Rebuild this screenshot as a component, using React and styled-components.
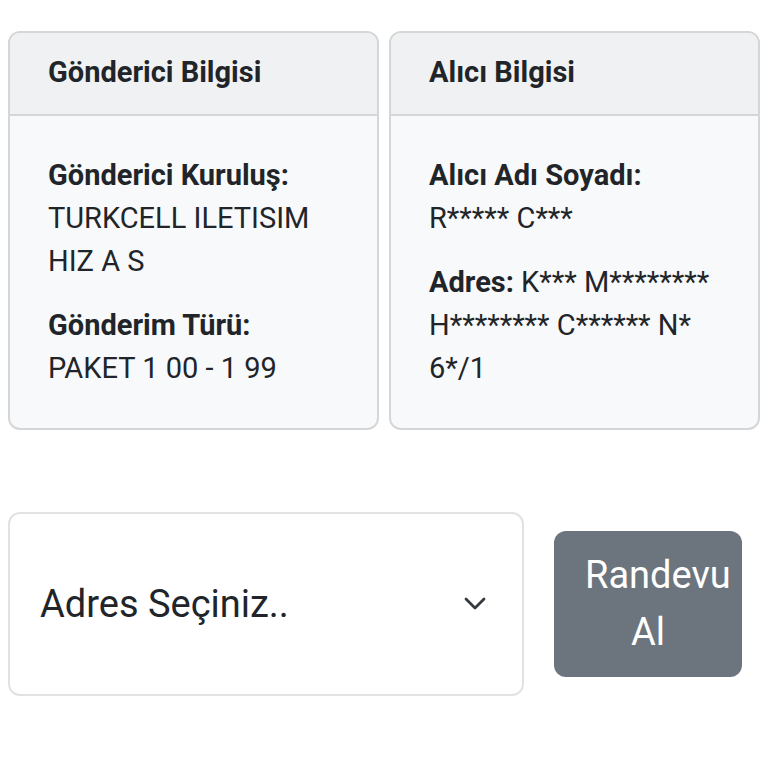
import React from "react";
import styled, { createGlobalStyle } from "styled-components";

const GlobalStyle = createGlobalStyle`
    * {
        box-sizing: border-box;
    }
    body {
        margin: 0;
        background: #ffffff;
        font-family: Roboto, "Liberation Sans", sans-serif;
        color: #212529;
    }
`;

const Page = styled.div`
    padding: 31px 8px 0 8px;
    width: 768px;
`;

const CardRow = styled.div`
    display: grid;
    grid-template-columns: 371px 371px;
    gap: 10px;
`;

const Card = styled.div`
    display: flex;
    flex-direction: column;
    border: 2px solid #d5d6d8;
    border-radius: 12px;
    background-color: #f8f9fa;
    overflow: hidden;
`;

const CardHeader = styled.div`
    padding: 18px 38px 20px;
    background-color: #f0f1f2;
    border-bottom: 2px solid #d5d6d8;
    font-size: 29px;
    line-height: 43px;
    font-weight: 700;
`;

const CardBody = styled.div`
    flex: 1;
    display: flex;
    flex-direction: column;
    gap: 21px;
    padding: 38px 30px 38px 38px;
    font-size: 29px;
    line-height: 43px;
`;

const Field = styled.div``;

const Label = styled.span`
    font-weight: 700;
    display: ${({ $inline }) => ($inline ? "inline" : "block")};
`;

const Value = styled.span`
    display: ${({ $inline }) => ($inline ? "inline" : "block")};
`;

const ActionRow = styled.div`
    display: flex;
    align-items: center;
    gap: 30px;
    margin-top: 82px;
`;

const Select = styled.div`
    width: 516px;
    height: 184px;
    display: flex;
    align-items: center;
    justify-content: space-between;
    padding: 0 36px 0 30px;
    border: 2px solid #e1e2e4;
    border-radius: 12px;
    background: #ffffff;
    font-size: 38px;
    color: #212529;
`;

const Chevron = styled.svg`
    width: 22px;
    height: 14px;
    flex-shrink: 0;
`;

const Button = styled.button`
    width: 188px;
    padding: 16px 31px;
    border: none;
    border-radius: 12px;
    background-color: #6c757d;
    color: #ffffff;
    font-family: Roboto, "Liberation Sans", sans-serif;
    font-size: 38px;
    line-height: 57px;
    text-align: center;
    cursor: pointer;
`;

const App = () => {
    return (
        <Page>
            <GlobalStyle />
            <CardRow>
                <Card>
                    <CardHeader>Gönderici Bilgisi</CardHeader>
                    <CardBody>
                        <Field>
                            <Label>Gönderici Kuruluş:</Label>
                            <Value>TURKCELL ILETISIM HIZ A S</Value>
                        </Field>
                        <Field>
                            <Label>Gönderim Türü:</Label>
                            <Value>PAKET 1 00 - 1 99</Value>
                        </Field>
                    </CardBody>
                </Card>
                <Card>
                    <CardHeader>Alıcı Bilgisi</CardHeader>
                    <CardBody>
                        <Field>
                            <Label>Alıcı Adı Soyadı:</Label>
                            <Value>R***** C***</Value>
                        </Field>
                        <Field>
                            <Label $inline>Adres:</Label> K*** M******** H******** C****** N* 6*/1
                        </Field>
                    </CardBody>
                </Card>
            </CardRow>
            <ActionRow>
                <Select>
                    <span>Adres Seçiniz..</span>
                    <Chevron viewBox="0 0 22 14">
                        <polyline
                            points="2,2 11,11 20,2"
                            fill="none"
                            stroke="#343a40"
                            strokeWidth="2.8"
                            strokeLinecap="round"
                            strokeLinejoin="round"
                        />
                    </Chevron>
                </Select>
                <Button>Randevu Al</Button>
            </ActionRow>
        </Page>
    );
};

export default App;
